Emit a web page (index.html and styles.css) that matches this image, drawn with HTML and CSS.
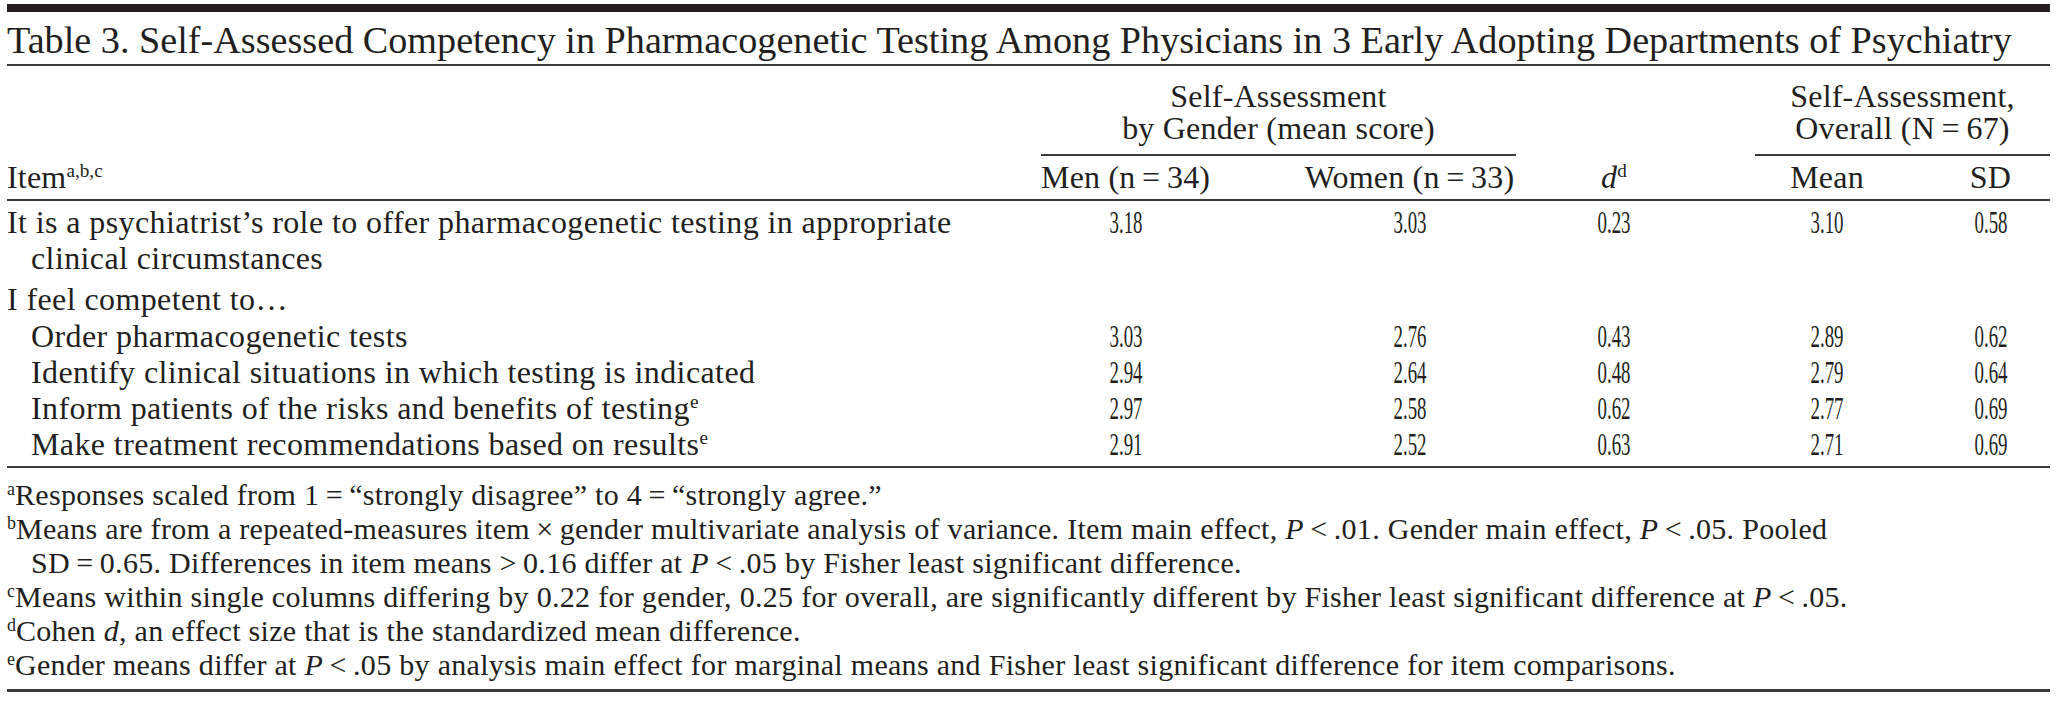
FILE: index.html
```html
<!DOCTYPE html>
<html lang="en">
<head>
<meta charset="utf-8">
<title>Table 3</title>
<link rel="stylesheet" href="styles.css">
</head>
<body>
<div class="page">
  <div class="topbar"></div>
  <h1 class="title">Table 3. Self-Assessed Competency in Pharmacogenetic Testing Among Physicians in 3 Early Adopting Departments of Psychiatry</h1>
  <table class="tbl">
    <colgroup>
      <col class="c-item"><col class="c-men"><col class="c-women"><col class="c-d"><col class="c-mean"><col class="c-sd">
    </colgroup>
    <thead>
      <tr class="hrow1">
        <th class="blank"></th>
        <th class="group" colspan="2">Self-Assessment<br>by Gender (mean score)</th>
        <th class="blank"></th>
        <th class="group group-overall" colspan="2">Self-Assessment,<br>Overall (N&#8201;=&#8201;67)</th>
      </tr>
      <tr class="hrow2">
        <th class="item-h">Item<sup>a,b,c</sup></th>
        <th class="men">Men (n&#8201;=&#8201;34)</th>
        <th class="women">Women (n&#8201;=&#8201;33)</th>
        <th class="dcol"><i>d</i><sup>d</sup></th>
        <th class="mean">Mean</th>
        <th class="sd">SD</th>
      </tr>
    </thead>
    <tbody>
      <tr class="first">
        <td class="item">It is a psychiatrist’s role to offer pharmacogenetic testing in appropriate clinical circumstances</td>
        <td class="men"><span class="num">3.18</span></td>
        <td class="women"><span class="num">3.03</span></td>
        <td class="dcol"><span class="num">0.23</span></td>
        <td class="mean"><span class="num">3.10</span></td>
        <td class="sd"><span class="num">0.58</span></td>
      </tr>
      <tr class="lead">
        <td class="item">I feel competent to…</td>
        <td class="men"></td><td class="women"></td><td class="dcol"></td><td class="mean"></td><td class="sd"></td>
      </tr>
      <tr class="after-lead">
        <td class="item sub">Order pharmacogenetic tests</td>
        <td class="men"><span class="num">3.03</span></td>
        <td class="women"><span class="num">2.76</span></td>
        <td class="dcol"><span class="num">0.43</span></td>
        <td class="mean"><span class="num">2.89</span></td>
        <td class="sd"><span class="num">0.62</span></td>
      </tr>
      <tr>
        <td class="item sub">Identify clinical situations in which testing is indicated</td>
        <td class="men"><span class="num">2.94</span></td>
        <td class="women"><span class="num">2.64</span></td>
        <td class="dcol"><span class="num">0.48</span></td>
        <td class="mean"><span class="num">2.79</span></td>
        <td class="sd"><span class="num">0.64</span></td>
      </tr>
      <tr>
        <td class="item sub">Inform patients of the risks and benefits of testing<sup>e</sup></td>
        <td class="men"><span class="num">2.97</span></td>
        <td class="women"><span class="num">2.58</span></td>
        <td class="dcol"><span class="num">0.62</span></td>
        <td class="mean"><span class="num">2.77</span></td>
        <td class="sd"><span class="num">0.69</span></td>
      </tr>
      <tr class="last">
        <td class="item sub">Make treatment recommendations based on results<sup>e</sup></td>
        <td class="men"><span class="num">2.91</span></td>
        <td class="women"><span class="num">2.52</span></td>
        <td class="dcol"><span class="num">0.63</span></td>
        <td class="mean"><span class="num">2.71</span></td>
        <td class="sd"><span class="num">0.69</span></td>
      </tr>
    </tbody>
  </table>
  <div class="notes">
    <p class="note"><sup>a</sup>Responses scaled from 1&#8201;=&#8201;“strongly disagree” to 4&#8201;=&#8201;“strongly agree.”</p>
    <p class="note"><sup>b</sup>Means are from a repeated-measures item&#8201;×&#8201;gender multivariate analysis of variance. Item main effect, <i>P</i>&#8201;&lt;&#8201;.01. Gender main effect, <i>P</i>&#8201;&lt;&#8201;.05. Pooled<br>SD&#8201;=&#8201;0.65. Differences in item means &gt;&#8201;0.16 differ at <i>P</i>&#8201;&lt;&#8201;.05 by Fisher least significant difference.</p>
    <p class="note"><sup>c</sup>Means within single columns differing by 0.22 for gender, 0.25 for overall, are significantly different by Fisher least significant difference at <i>P</i>&#8201;&lt;&#8201;.05.</p>
    <p class="note"><sup>d</sup>Cohen <i>d</i>, an effect size that is the standardized mean difference.</p>
    <p class="note"><sup>e</sup>Gender means differ at <i>P</i>&#8201;&lt;&#8201;.05 by analysis main effect for marginal means and Fisher least significant difference for item comparisons.</p>
  </div>
</div>
</body>
</html>
```
FILE: styles.css
```css
html, body {
  margin: 0;
  padding: 0;
  background: #ffffff;
}
body {
  font-family: "Liberation Serif", "Times New Roman", serif;
  color: #231f20;
}
.page {
  width: 2043px;
  padding: 4px 0 0 7px;
}
.topbar {
  height: 8px;
  background: #231f20;
}
.title {
  margin: 0;
  font-weight: normal;
  font-size: 38.2px;
  line-height: 48px;
  height: 48px;
  padding-top: 4px;
  white-space: nowrap;
  border-bottom: 2px solid #3a3a3a;
}
.tbl {
  width: 2043px;
  table-layout: fixed;
  border-collapse: separate;
  border-spacing: 0;
  font-size: 32px;
}
.c-item { width: 1034px; }
.c-men { width: 169px; }
.c-women { width: 306px; }
.c-d { width: 239px; }
.c-mean { width: 176px; }
.c-sd { width: 119px; }

.tbl th, .tbl td {
  padding: 0;
  font-weight: normal;
  vertical-align: top;
  text-align: center;
}
.tbl th {
  font-size: 32px;
  line-height: 32px;
  letter-spacing: 0.2px;
  white-space: nowrap;
}
.hrow1 th {
  padding: 14px 0 10px;
}
.hrow1 .group {
  border-bottom: 2px solid #3a3a3a;
}
.hrow2 th {
  padding-top: 5px;
  padding-bottom: 6px;
  border-bottom: 2px solid #3a3a3a;
}
.tbl .item-h, .tbl .item {
  text-align: left;
}
.tbl .women { padding-left: 93px; }
.tbl .dcol { padding-right: 43px; }
.tbl .mean { padding-right: 32px; }

sup {
  font-size: 0.6em;
  line-height: 0;
  vertical-align: 0.55em;
  letter-spacing: 0;
}
.tbl td {
  line-height: 36px;
}
.tbl tr.first td {
  padding-top: 3px;
}
.tbl tr.lead td {
  padding-top: 5px;
}
.tbl tr.after-lead td {
  padding-top: 1px;
}
.tbl tr.last td {
  padding-bottom: 4px;
  border-bottom: 2px solid #3a3a3a;
}
.tbl td.item {
  padding-left: 24px;
  padding-right: 60px;
  text-indent: -24px;
  letter-spacing: 0.4px;
}
.tbl td.item.sub {
  text-indent: 0;
}
.num {
  display: inline-block;
  transform: scaleX(0.59);
}
.notes {
  border-bottom: 3px solid #3a3a3a;
  padding: 10px 0 7px;
}
.note {
  margin: 0;
  font-size: 30px;
  line-height: 34px;
  letter-spacing: 0.3px;
  padding-left: 24px;
  text-indent: -24px;
  white-space: nowrap;
}
```
